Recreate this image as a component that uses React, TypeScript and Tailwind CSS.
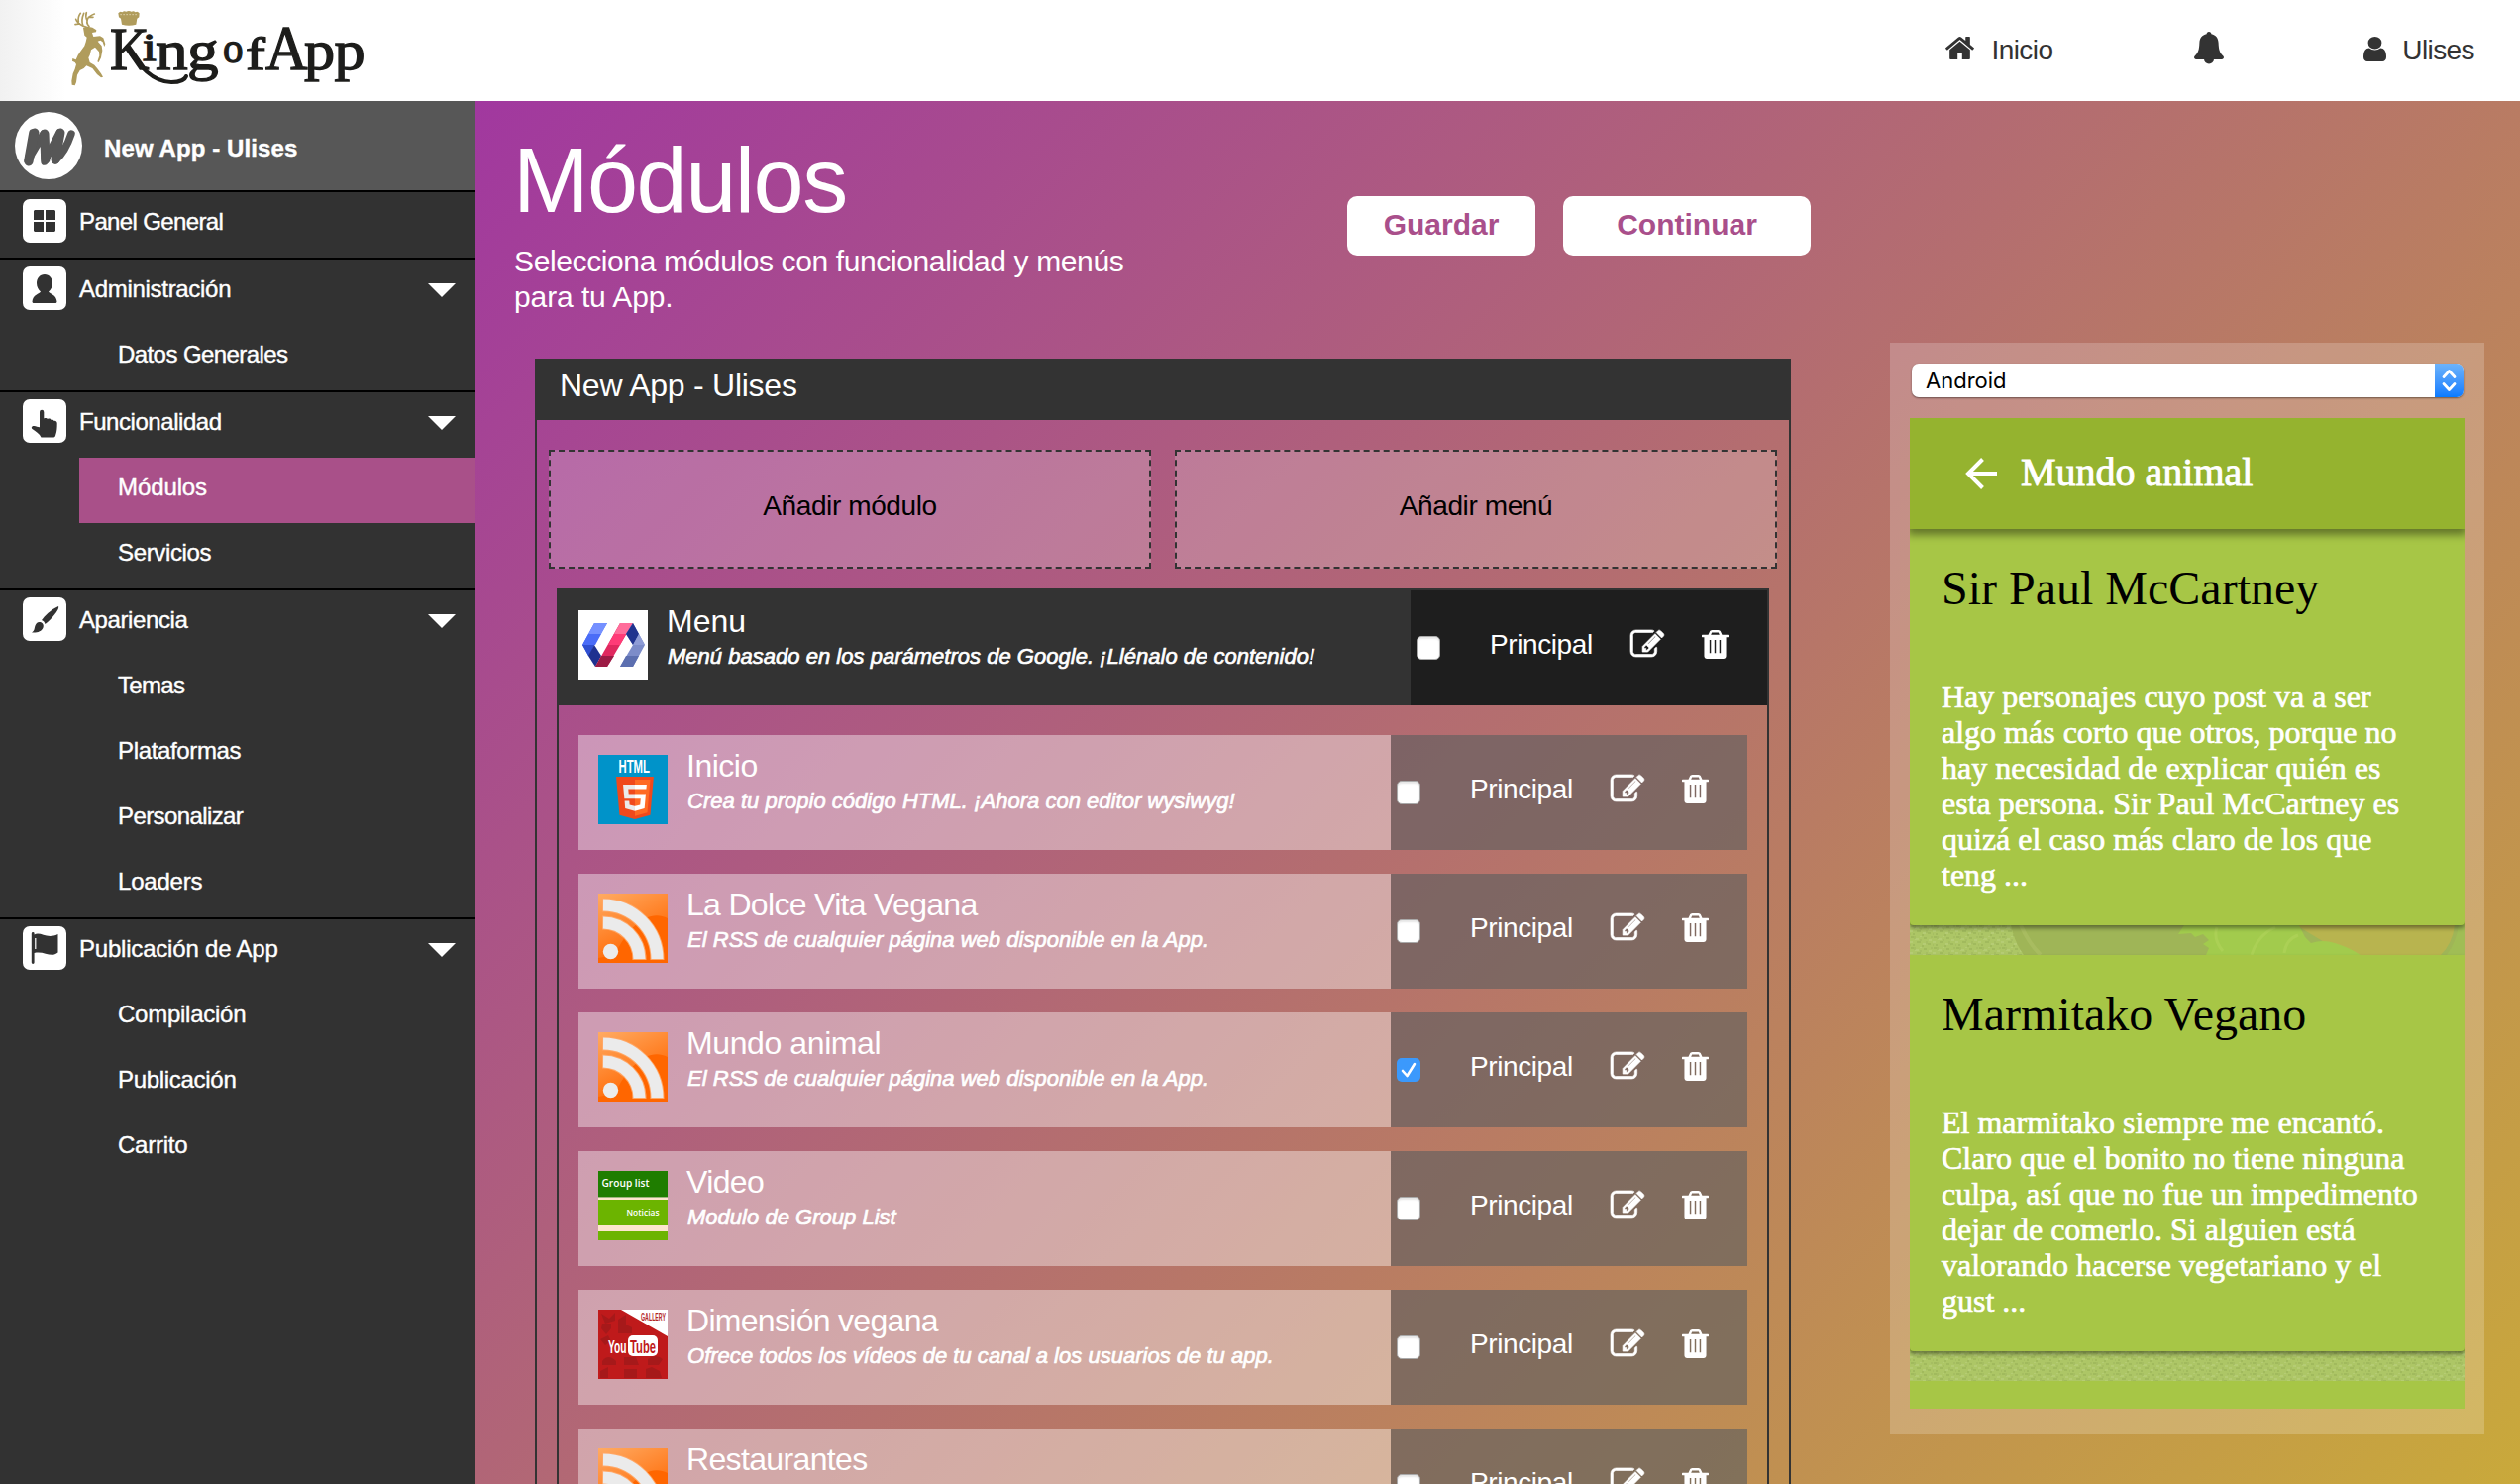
import type { ReactNode } from "react";

/* ---------- icons ---------- */

const HomeIcon = () => (
  <svg className="mt-[37px] h-[23px] w-[29px]" viewBox="88 253 1616 1283" preserveAspectRatio="none" fill="#333">
    <path d="M1472 992v480q0 26-19 45t-45 19h-384v-384h-256v384h-384q-26 0-45-19t-19-45v-480q0-1 .5-3t.5-3l575-474 575 474q1 2 1 6zm223-69l-62 74q-8 9-21 11h-3q-13 0-21-7l-692-577-692 577q-12 8-24 7-13-2-21-11l-62-74q-8-10-7-23.500t11-21.500l719-599q32-26 76-26t76 26l244 204v-195q0-14 9-23t23-9h192q14 0 23 9t9 23v408l219 182q10 8 11 21.500t-7 23.500z" />
  </svg>
);

const BellIcon = () => (
  <svg className="mt-8 h-[33px] w-[30px]" viewBox="0 0 30 33" fill="#333">
    <path d="M15 0c1.500 0 2.400 1 2.400 2.300 4.600 1 7 4.300 7.200 9 .3 7.200 1.200 9.800 4.700 13.200 1.300 1.400.6 3.500-1.300 3.500H2c-1.900 0-2.600-2.100-1.300-3.500C4.200 21.100 5.100 18.500 5.400 11.300c.2-4.700 2.600-8 7.200-9C12.600 1 13.500 0 15 0z" />
    <path d="M10 27.500h10a5 5 0 0 1-10 0z" />
  </svg>
);

const UserIcon = () => (
  <svg className="mt-[37px] h-[25px] w-[23px]" viewBox="256 128 1280 1536" preserveAspectRatio="none" fill="#333">
    <path d="M1536 1399q0 109-62.500 187t-150.500 78h-854q-88 0-150.500-78t-62.500-187q0-85 8.500-160.500t31.500-152 58.500-131 94-89 134.500-34.500q131 128 313 128t313-128q76 0 134.500 34.500t94 89 58.500 131 31.500 152 8.500 160.500zm-256-887q0 159-112.500 271.500t-271.500 112.500-271.500-112.500-112.500-271.500 112.500-271.500 271.500-112.500 271.500 112.500 112.500 271.500z" />
  </svg>
);

const EditIcon = () => (
  <svg className="mt-10 h-[27px] w-[34px] overflow-visible" viewBox="0 128 1792 1408" preserveAspectRatio="none" fill="#fff" stroke="#fff" strokeWidth="34">
    <path d="M888 1184l116-116-152-152-116 116v56h96v96h56zm440-720q-16-16-33 1l-350 350q-17 17-1 33t33-1l350-350q17-17 1-33zm80 594v190q0 119-84.500 203.500t-203.500 84.500h-832q-119 0-203.500-84.500t-84.500-203.500v-832q0-119 84.500-203.500t203.500-84.500h832q63 0 117 25 15 7 18 23 3 17-9 29l-49 49q-14 14-32 8-23-6-45-6h-832q-66 0-113 47t-47 113v832q0 66 47 113t113 47h832q66 0 113-47t47-113v-126q0-13 9-22l64-64q15-15 35-7t20 29zm-96-738l288 288-672 672h-288v-288zm444 132l-92 92-288-288 92-92q28-28 68-28t68 28l152 152q28 28 28 68t-28 68z" />
  </svg>
);

const TrashIcon = () => (
  <svg className="mt-10 ml-[38px] h-[29px] w-[27px]" viewBox="192 128 1408 1536" preserveAspectRatio="none" fill="#fff">
    <path
      fillRule="evenodd"
      d="M672 384h448l-48-117q-7-9-17-11h-317q-10 2-17 11zM1600 416v64q0 14-9 23t-23 9h-96v1000q0 64-40 108t-100 44h-872q-60 0-100-44t-40-108v-1000h-96q-14 0-23-9t-9-23v-64q0-14 9-23t23-9h309l70-167q15-37 54-63t79-26h320q40 0 79 26t54 63l70 167h309q14 0 23 9t9 23zM600 660v700h76v-700zM858 660v700h76v-700zM1116 660v700h76v-700z"
    />
  </svg>
);

const Logo = () => (
  <svg className="h-[102px] w-[400px]" viewBox="0 0 400 102">
    <g transform="translate(60 0) scale(.33333)" fill="#b09c5c">
      <path d="M72 84l14-4 14 3 12 8-1 6-12 2 4 12 20-2 10 6 6 18-3 8-5-14-7-5-8 3 12 14 2 14-4 22-7 14-4-2 6-18-1-12-12-14-12 8-4 16-4 8 4 14 14 8 10 12 10 14 6 10-6 2-12-10-14-18-18-8-8 8-12 6-8 14-3 22-4 10-9-2-1-12 4-22 6-14 4-14-4-6-8-4 1-8 10 4 6-14 8-12 12-16 4-12 3-14-7-6z" />
      <g fill="none" stroke="#b09c5c" strokeWidth="5" strokeLinecap="round">
        <path d="M82 82C66 78 52 68 50 58M62 72l-14 2M58 66c-2-10 0-18 6-26M72 78c-6-12-4-24 2-38M90 80c-8-8-8-18-2-28 6-4 12-8 18-10M84 62c-4-8-6-14-2-24M88 52l14 0" />
      </g>
      <path d="M178 40q6-8 12-3 6-6 12-2 8-4 16 0 6-4 12 2 6-5 12 3l-1 12-6 4-3 18q-22 6-43 0l-3-18-6-4z" />
      <path d="M184 44h54" stroke="#d9cda6" strokeWidth="3" strokeDasharray="5 4" />
    </g>
    <g fill="#1d1d1b" stroke="#1d1d1b" strokeWidth="1.300" className="font-['Liberation_Serif',serif]">
      <text x="111" y="69.500" fontSize="62" textLength="39" lengthAdjust="spacingAndGlyphs">K</text>
      <text x="144" y="61" fontSize="39" textLength="13" lengthAdjust="spacingAndGlyphs">i</text>
      <text x="157" y="69.500" fontSize="57" textLength="32" lengthAdjust="spacingAndGlyphs">n</text>
      <text x="189" y="70" fontSize="58" textLength="31" lengthAdjust="spacingAndGlyphs">g</text>
      <text x="225" y="62.500" fontSize="44" textLength="20" lengthAdjust="spacingAndGlyphs">o</text>
      <text x="248" y="69.500" fontSize="47" textLength="19" lengthAdjust="spacingAndGlyphs">f</text>
      <text x="268" y="69.500" fontSize="63" textLength="42" lengthAdjust="spacingAndGlyphs">A</text>
      <text x="307" y="69.500" fontSize="56" textLength="61" lengthAdjust="spacingAndGlyphs">pp</text>
    </g>
    <path d="M128 48C140 66 154 83 173 83c9 0 14-3 15-6" fill="none" stroke="#1d1d1b" strokeWidth="4" strokeLinecap="round" />
  </svg>
);

const AppBadge = () => (
  <svg className="mt-[11px] ml-[15px] size-[68px]" viewBox="0 0 68 68">
    <circle cx="34" cy="34" r="34" fill="#fff" />
    <path
      d="M18 21L13 49 29 22 30 50 45 21 41 49Q51 40 57 22"
      fill="none"
      stroke="#575757"
      strokeWidth="7.500"
      strokeLinejoin="round"
      strokeLinecap="round"
    />
    <path d="M20 21L14 50M30 22L31 48M46 21L41 48" fill="none" stroke="#575757" strokeWidth="9" strokeLinecap="round" />
  </svg>
);

const Tile = ({ children }: { children: ReactNode }) => (
  <svg className="mt-[7px] ml-[23px] size-11 shrink-0" viewBox="0 0 44 44" fill="#323232">
    <rect width="44" height="44" rx="7" fill="#fff" />
    {children}
  </svg>
);

const GridTile = () => (
  <Tile>
    <path d="M12 11h9v10h-10v-9zM23 11h9l1 1v9h-10zM11 23h10v10h-9l-1-1zM23 23h10v9l-1 1h-9z" />
  </Tile>
);
const PersonTile = () => (
  <Tile>
    <path d="M22 8c5 0 8 4 8 9 0 4-2 6.500-4 8.500 1 2 8 3 8.500 10 0 .8-.5 1.500-1.500 1.500H11c-1 0-1.500-.7-1.500-1.500C10 28.500 17 27.500 18 25.500c-2-2-4-4.500-4-8.500 0-5 3-9 8-9z" />
  </Tile>
);
const HandTile = () => (
  <Tile>
    <path d="M17 13a2 2 0 0 1 4.300 0v6.500c1-.8 3-.6 3.700.5 1.200-.8 3-.4 3.700.9 1.300-.5 2.600 0 3 1 1.700-.3 3 .7 3 2.300 0 5-.2 8-1.400 11.500-.3 1.700-1 2.800-2 2.800H18.500c-1.500-3.500-5-6-9-8.500-1.500-1.300-.2-3.400 2-3 2 .3 3.800 1.300 5.500 1.200z" />
  </Tile>
);
const BrushTile = () => (
  <Tile>
    <path d="M36 9c1 2-2 6-4 8.500-3 4-6 7-9.500 9.500-.5-2-1.500-3.300-3.500-4C22 19 28 12.500 36 9zM17.500 25c2.500.5 4 3 3 5.500-1.500 4-6 5.500-11.500 5 3-2 2.500-4 3.500-7 .8-2.300 2.500-4 5-3.500z" />
  </Tile>
);
const FlagTile = () => (
  <Tile>
    <path d="M8.800 7.500a1.400 1.400 0 0 1 2.800 0v29a1.400 1.400 0 0 1-2.800 0z M11.500 8.500C18 5 24 13.500 35.500 8v18.500c-7 6-14-2-24 .5z" />
    <path d="M12.800 12v11" stroke="#fff" strokeWidth="1.200" />
  </Tile>
);

const PolymerIcon = () => (
  <svg className="size-[70px] shrink-0" viewBox="0 0 70 70">
    <rect width="70" height="70" fill="#fff" />
    <path d="M16 13h13L16 35 10 46 4 35z" fill="#3f66f0" />
    <path d="M16 13h13l-6 11H10z" fill="#7590ff" />
    <path d="M10 24h13l-6 11H4z" fill="#4a6cf7" />
    <path d="M4 35h12l-5 11H10z" fill="#2f4fd0" />
    <path d="M10 46l6-11 7 11-6 11z" fill="#1f3190" />
    <path d="M42 13h13L29 57H17z" fill="#e0285f" />
    <path d="M42 13h13l-7 11H36z" fill="#ff6d9b" />
    <path d="M36 24h12l-6 11H30z" fill="#ff3b77" />
    <path d="M23 46h13l-7 11H17z" fill="#9c1b45" />
    <path d="M55 13l12 22-12 22H42l13-22-7-11z" fill="#7c8cc9" />
    <path d="M55 13l6 11-6 11-7-11z" fill="#20338f" />
    <path d="M61 24l6 11H55z" fill="#8e9cd6" />
    <path d="M48 46h13l-6 11H42z" fill="#5c6fb0" />
  </svg>
);

const HtmlIcon = () => (
  <svg className="size-[70px] shrink-0" viewBox="0 0 70 70">
    <rect width="70" height="70" fill="#0093c9" />
    <text x="20.500" y="18" fontSize="17.500" fontWeight="700" fill="#fff" textLength="31.500" lengthAdjust="spacingAndGlyphs" className="font-['Liberation_Sans',sans-serif]">
      HTML
    </text>
    <g transform="translate(15.500 22) scale(.084)">
      <path d="M71 460L30 0h451l-41 460-185 52z" fill="#f0491c" />
      <path d="M256 472l149-41 35-394H256z" fill="#ff6a24" />
      <path d="M256 208h-75l-5-58h80V94H114l1 15 14 156h127zM256 355h-1l-63-17-4-45h-56l7 89 116 32z" fill="#ebebeb" />
      <path d="M255 208v57h70l-7 73-63 17v59l116-32 1-10 13-149 2-15zM255 94v56h137l1-12 3-29 1-15z" fill="#fff" />
    </g>
  </svg>
);

const RssIcon = () => (
  <svg className="size-[70px] shrink-0" viewBox="0 0 70 70">
    <defs>
      <linearGradient id="rss" x1="0" y1="0" x2=".5" y2="1">
        <stop offset="0" stopColor="#ffab63" />
        <stop offset=".75" stopColor="#ff7414" />
        <stop offset="1" stopColor="#ff6600" />
      </linearGradient>
    </defs>
    <rect width="70" height="70" fill="url(#rss)" />
    <path d="M70 25C50 15 32 35 22 52 18 60 8 64 0 65v5h70z" fill="#ff6600" />
    <g fill="none" stroke="#ffa766" strokeWidth="14">
      <path d="M4 29.500A37 37 0 0 1 41.500 67" />
      <path d="M4 11.500A55 55 0 0 1 59.500 67" />
    </g>
    <g fill="none" stroke="#ebebeb" strokeWidth="12">
      <path d="M5 29.500A37 37 0 0 1 41.500 66" />
      <path d="M5 11.500A55 55 0 0 1 59.500 66" />
    </g>
    <circle cx="12.500" cy="58.500" r="7.700" fill="#ebebeb" />
  </svg>
);

const GroupListIcon = () => (
  <svg className="size-[70px] shrink-0" viewBox="0 0 70 70">
    <rect width="70" height="70" fill="#fde6cd" />
    <rect width="70" height="26" fill="#1f7d00" />
    <rect y="26" width="70" height="1" fill="#9db57f" />
    <rect y="29" width="70" height="26" fill="#6cb400" />
    <rect y="61" width="70" height="9" fill="#6cb400" />
    <g fill="#fff" className="font-['Open_Sans',sans-serif]" fontWeight="600">
      <text x="3.500" y="16" fontSize="10.500" textLength="48" lengthAdjust="spacingAndGlyphs">Group list</text>
      <text x="28.500" y="45" fontSize="8.500" textLength="33" lengthAdjust="spacingAndGlyphs">Noticias</text>
    </g>
  </svg>
);

const YoutubeIcon = () => (
  <svg className="size-[70px] shrink-0" viewBox="0 0 70 70">
    <rect width="70" height="70" fill="#bf1a1b" />
    <g fill="#9d1a1b" opacity=".75">
      <path d="M3 4l8 5 6-6v8l-10 3zM4 14h9v5l-5 6-5-6zM20 10l8-5v10l6 3v6H20zM2 30l8-4 3 6-6 4zM4 52q6-8 14 0v4H4zM26 48h12l3 8H26zM50 50q8-6 15 0l-4 6H50zM2 62l8-4v11H2zM26 60h13v9H26zM48 60l6-2 8 4 2 7H48z" />
    </g>
    <path d="M23 0h47v27z" fill="#fff" />
    <rect x="30" y="26" width="30" height="21" rx="5" fill="#fff" />
    <g fontWeight="700" className="font-['Liberation_Sans',sans-serif]">
      <text x="43" y="11" fontSize="10" fill="#b3272a" textLength="25" lengthAdjust="spacingAndGlyphs">GALLERY</text>
      <text x="10" y="43.500" fontSize="18" fill="#fff" textLength="18.500" lengthAdjust="spacingAndGlyphs">You</text>
      <text x="32" y="43.500" fontSize="18" fill="#c01a1b" textLength="26" lengthAdjust="spacingAndGlyphs">Tube</text>
    </g>
  </svg>
);

/* ---------- sidebar ---------- */

type Entry = { label: string; track: string; active?: boolean };
type Section = Entry & { icon: ReactNode; items: Entry[] };

const sections: Section[] = [
  { label: "Panel General", track: "tracking-[-0.63px]", icon: <GridTile />, items: [] },
  {
    label: "Administración", track: "tracking-[-0.3px]", icon: <PersonTile />,
    items: [{ label: "Datos Generales", track: "tracking-[-0.58px]" }],
  },
  {
    label: "Funcionalidad", track: "tracking-[-0.45px]", icon: <HandTile />,
    items: [
      { label: "Módulos", track: "tracking-[-0.1px]", active: true },
      { label: "Servicios", track: "tracking-[-0.35px]" },
    ],
  },
  {
    label: "Apariencia", track: "tracking-[-0.4px]", icon: <BrushTile />,
    items: [
      { label: "Temas", track: "tracking-[-0.7px]" },
      { label: "Plataformas", track: "tracking-[-0.35px]" },
      { label: "Personalizar", track: "tracking-[-0.6px]" },
      { label: "Loaders", track: "tracking-[-0.2px]" },
    ],
  },
  {
    label: "Publicación de App", track: "tracking-[-0.2px]", icon: <FlagTile />,
    items: [
      { label: "Compilación", track: "tracking-[-0.25px]" },
      { label: "Publicación", track: "tracking-[-0.3px]" },
      { label: "Carrito", track: "tracking-[-0.25px]" },
    ],
  },
];

const Sidebar = () => (
  <aside className="w-[480px] shrink-0 bg-[#323232] text-2xl text-white">
    <div className="flex h-[90px] bg-[#575757]">
      <AppBadge />
      <span className="mt-[30px] ml-[22px] leading-[36px] font-bold tracking-[0.1px] [-webkit-text-stroke:0.4px_white]">New App - Ulises</span>
    </div>
    {sections.map((s) => (
      <section key={s.label} className="border-t-2 border-black">
        <div className="flex h-[66px]">
          {s.icon}
          <span className={`mt-3 ml-[13px] flex-1 leading-[36px] [-webkit-text-stroke:0.4px_white] ${s.track}`}>{s.label}</span>
          {s.items.length > 0 && (
            <svg className="mt-6 mr-5 h-[14px] w-7" viewBox="0 0 28 14" fill="#fff">
              <path d="M0 0h28L14 14z" />
            </svg>
          )}
        </div>
        {s.items.map((i) => (
          <div key={i.label} className={`ml-20 h-[66px] pt-3 pl-[39px] ${i.active ? "bg-[#a95089]" : ""}`}>
            <div className={`leading-[36px] [-webkit-text-stroke:0.4px_white] ${i.track}`}>{i.label}</div>
          </div>
        ))}
      </section>
    ))}
  </aside>
);

/* ---------- modules ---------- */

type Module = { title: string; track: string; text: string; icon: ReactNode; checked?: boolean };

const rss = "El RSS de cualquier página web disponible en la App.";
const modules: Module[] = [
  { title: "Inicio", track: "tracking-[-0.5px]", text: "Crea tu propio código HTML. ¡Ahora con editor wysiwyg!", icon: <HtmlIcon /> },
  { title: "La Dolce Vita Vegana", track: "tracking-[-0.68px]", text: rss, icon: <RssIcon /> },
  { title: "Mundo animal", track: "tracking-[-0.4px]", text: rss, icon: <RssIcon />, checked: true },
  { title: "Video", track: "tracking-[-0.6px]", text: "Modulo de Group List", icon: <GroupListIcon /> },
  { title: "Dimensión vegana", track: "tracking-[-0.7px]", text: "Ofrece todos los vídeos de tu canal a los usuarios de tu app.", icon: <YoutubeIcon /> },
  { title: "Restaurantes", track: "tracking-[-0.65px]", text: rss, icon: <RssIcon /> },
];

const Checkbox = ({ checked }: { checked?: boolean }) =>
  checked ? (
    <svg className="mt-[46px] size-6 rounded-[5px] bg-[#3b99fc]" viewBox="0 0 24 24" fill="none">
      <path d="M6 13l4.500 5L18 6" stroke="#fff" strokeWidth="2.600" strokeLinecap="round" strokeLinejoin="round" />
    </svg>
  ) : (
    <span className="mt-[46px] size-6 rounded-[5px] border border-[#a9a9a9] bg-white shadow-[inset_0_2px_2px_rgba(0,0,0,0.1)]" />
  );

const ModuleRow = ({ m, dark }: { m: Module; dark?: boolean }) => (
  <div className={`flex h-[116px] shrink-0 text-white ${dark ? "bg-[#333]" : "bg-white/40"}`}>
    <div className="flex flex-1 gap-5 pl-5">
      <div className="mt-5">{m.icon}</div>
      <div className="pt-[13px]">
        <div className={`-ml-px text-[32px] leading-[36px] ${m.track}`}>{m.title}</div>
        <div className="mt-1 text-[22px] leading-[28px] tracking-[0.02px] whitespace-nowrap italic [-webkit-text-stroke:0.7px_white]">{m.text}</div>
      </div>
    </div>
    <div className="flex w-[360px] items-start bg-black/40 pl-1.5">
      <Checkbox checked={m.checked} />
      <span className="mt-[39px] ml-[50px] w-[142px] text-[28px] leading-[32px] tracking-[-0.4px]">Principal</span>
      <EditIcon />
      <TrashIcon />
    </div>
  </div>
);

const Drop = ({ children }: { children: ReactNode }) => (
  <div className="flex h-[120px] items-center justify-center border-2 border-dashed border-[#333] bg-white/20 pb-[7px] text-[28px] tracking-[-0.4px] text-black">
    {children}
  </div>
);

/* ---------- phone preview ---------- */

const Card = ({ title, children }: { title: string; children: ReactNode }) => (
  <div className="relative h-[400px] shrink-0 rounded-b-[4px] bg-[#a7c646] px-8 pt-[33px] shadow-[0_3px_4px_rgba(0,0,0,0.4)]">
    <h3 className="text-[48px] leading-[54px] text-black">{title}</h3>
    <p className="mt-16 text-[32px] leading-[36px] text-white [-webkit-text-stroke:0.7px_white]">{children}</p>
  </div>
);

const Weave = ({ id }: { id: string }) => (
  <>
    <defs>
      <pattern id={id} width="23" height="11" patternUnits="userSpaceOnUse">
        <rect width="23" height="11" fill="#adc666" />
        <path d="M1 1h3M7 6h4M14 2h3M18 8h3M3 9h2M12 10h2" stroke="#9db65a" strokeWidth="1.400" />
        <path d="M5 3h4M0 6h3M13 8h3M19 4h3M10 0h2" stroke="#b8cf78" strokeWidth="1.300" />
        <path d="M5 0v3M11 3v2M0 8v2M17 5v3M22 0v2" stroke="#a1b95f" strokeWidth="1.200" />
      </pattern>
    </defs>
    <rect width="560" height="30" fill={`url(#${id})`} />
  </>
);

const Phone = () => (
  <div className="mt-[244px] h-[1102px] w-[600px] bg-white/20 px-5 pt-[21px]">
    <div className="ml-0.5 flex h-[34px] w-[557px] overflow-hidden rounded-[7px] bg-white shadow-[0_1px_2px_rgba(0,0,0,0.45)]">
      <span className="flex-1 pl-[14px] font-['Inter',sans-serif] text-[22px] leading-[34px] text-black">Android</span>
      <svg className="h-[34px] w-[29px] bg-linear-to-b from-[#6cb3fa] to-[#067bff]" viewBox="0 0 29 34" fill="none" stroke="#fff" strokeWidth="2.800" strokeLinecap="round" strokeLinejoin="round">
        <path d="M9 13.500l5.500-6 5.500 6M9 20.500l5.500 6 5.500-6" />
      </svg>
    </div>
    <div className="mt-[21px] flex h-[1000px] flex-col overflow-hidden bg-[#a7c646] font-['Liberation_Serif',serif]">
      <div className="relative z-10 flex h-28 shrink-0 bg-[#95b32f] text-white shadow-[0_4px_8px_2px_rgba(0,0,0,0.4)]">
        <svg className="mt-10 ml-[56px] size-8" viewBox="0 0 32 32" fill="none" stroke="#fff" strokeWidth="4">
          <path d="M17.500 1.500L3 16l14.500 14.500M3 16h29" />
        </svg>
        <span className="mt-[33px] ml-6 text-[40px] leading-[44px] [-webkit-text-stroke:0.9px_white]">Mundo animal</span>
      </div>
      <Card title="Sir Paul McCartney">
        Hay personajes cuyo post va a ser algo más corto que otros, porque no hay necesidad de explicar quién es esta persona. Sir Paul McCartney es quizá el caso más claro de los que teng ...
      </Card>
      <svg className="h-[30px] w-full shrink-0" viewBox="0 0 560 30">
        <Weave id="weave-a" />
        <path d="M102 0q4 18 13 30H560V0z" fill="#9fb557" />
        <path d="M112 0q8 18 20 30" stroke="#a8bc60" strokeWidth="4" fill="none" />
        <path d="M390 0h160q-2 18-14 30H440z" fill="#b8b44f" />
        <path d="M554 0h6v30h-18q10-14 12-30z" fill="#a0bd55" />
        <path d="M271 9l6-9h116l6 12 6 6q12-4 24 0 14 4 26 12H299l3-7-6-4 6-4-6-6-8 3-4-4z" fill="#a2cb4d" />
        <path d="M345 30q6-20 24-28M378 28q2-14 14-18M310 2q-4 12 6 24" stroke="#abd055" strokeWidth="3" fill="none" />
      </svg>
      <Card title="Marmitako Vegano">
        El marmitako siempre me encantó. Claro que el bonito no tiene ninguna culpa, así que no fue un impedimento dejar de comerlo. Si alguien está valorando hacerse vegetariano y el gust ...
      </Card>
      <svg className="h-[30px] w-full shrink-0" viewBox="0 0 560 30">
        <Weave id="weave-b" />
      </svg>
    </div>
  </div>
);

/* ---------- page ---------- */

export default function App() {
  return (
    <div className="flex h-[1498px] w-full flex-col overflow-hidden font-['Liberation_Sans',Arial,sans-serif]">
      <header className="flex h-[102px] shrink-0 items-start justify-between bg-linear-to-r from-[#f1f1f1] to-white to-[66px] pr-[46px] text-[28px] leading-[32px] tracking-[-0.6px] text-[#333]">
        <Logo />
        <nav className="flex items-start">
          <HomeIcon />
          <span className="mt-[35px] ml-[18px]">Inicio</span>
          <span className="ml-[143px]"><BellIcon /></span>
          <span className="ml-[141px]"><UserIcon /></span>
          <span className="mt-[35px] ml-4">Ulises</span>
        </nav>
      </header>
      <div className="flex flex-1 overflow-hidden">
        <Sidebar />
        <main className="flex flex-1 items-start bg-[linear-gradient(135deg,#a1389f,#c9a93b)]">
          <div className="w-[1348px] shrink-0">
            <div className="flex h-[260px] items-start justify-between pl-10 text-white">
              <div>
                <h1 className="mt-[30px] -ml-0.5 text-[92px] leading-[100px] tracking-[-1.6px]">Módulos</h1>
                <p className="mt-[14px] -ml-px text-[30px] leading-[36px] tracking-[-0.38px]">
                  Selecciona módulos con funcionalidad y menús
                  <br />
                  <span className="tracking-[-0.1px]">para tu App.</span>
                </p>
              </div>
              <div className="mt-24 flex gap-7 text-[30px] font-bold text-[#a94f8b]">
                <button className="h-[60px] w-[190px] rounded-[10px] bg-white pb-[3px]">Guardar</button>
                <button className="h-[60px] w-[250px] rounded-[10px] bg-white pb-[3px]">Continuar</button>
              </div>
            </div>
            <div className="ml-[60px] w-[1268px] border-2 border-[#333]">
              <div className="h-[60px] bg-[#333] pt-[5px] pl-[23px] text-[32px] leading-[40px] tracking-[-0.25px] text-white">New App - Ulises</div>
              <div className="grid grid-cols-2 gap-6 px-3 pt-[30px]">
                <Drop>Añadir módulo</Drop>
                <Drop>Añadir menú</Drop>
              </div>
              <div className="mx-5 mt-5 border-2 border-[#333]">
                <ModuleRow
                  dark
                  m={{ title: "Menu", track: "tracking-normal", text: "Menú basado en los parámetros de Google. ¡Llénalo de contenido!", icon: <PolymerIcon /> }}
                />
                <div className="flex flex-col gap-6 px-5 pt-[30px]">
                  {modules.map((m) => (
                    <ModuleRow key={m.title} m={m} />
                  ))}
                </div>
              </div>
            </div>
          </div>
          <div className="ml-20"><Phone /></div>
        </main>
      </div>
    </div>
  );
}
